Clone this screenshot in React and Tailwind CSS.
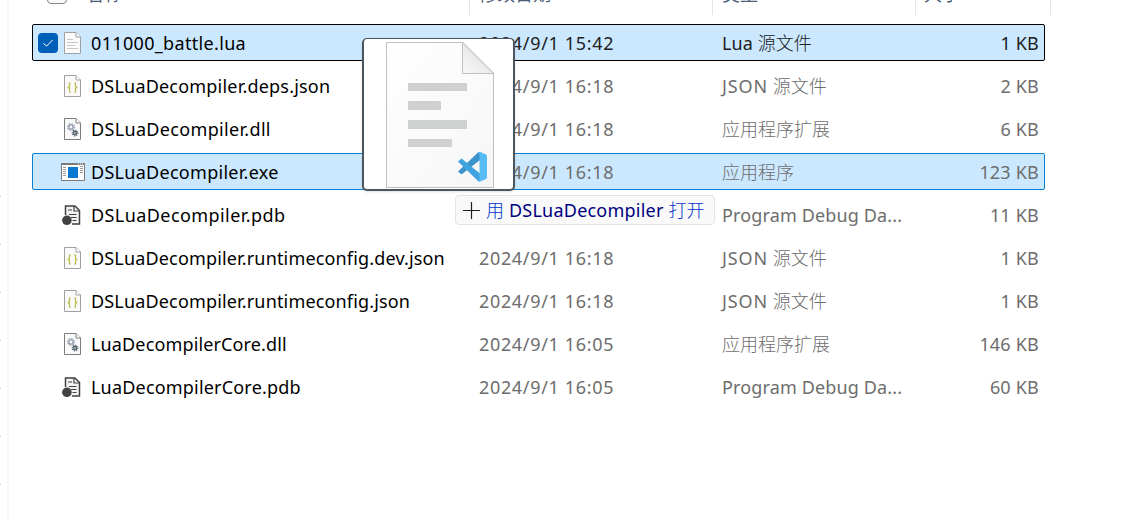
import React from 'react';

const rows = [
  { name: '011000_battle.lua', date: '2024/9/1 15:42', type: ['Lua', '源文件'], size: '1 KB', icon: 'text', state: 'focused', tracking: 'tracking-[0.33px]' },
  { name: 'DSLuaDecompiler.deps.json', date: '2024/9/1 16:18', type: ['JSON', '源文件'], size: '2 KB', icon: 'json', tracking: 'tracking-[0.2px]' },
  { name: 'DSLuaDecompiler.dll', date: '2024/9/1 16:18', type: ['', '应用程序扩展'], size: '6 KB', icon: 'dll', tracking: 'tracking-[0.33px]' },
  { name: 'DSLuaDecompiler.exe', date: '2024/9/1 16:18', type: ['', '应用程序'], size: '123 KB', icon: 'exe', state: 'target', tracking: 'tracking-[0.28px]' },
  { name: 'DSLuaDecompiler.pdb', date: '2024/9/1 16:18', type: ['Program Debug Da...', ''], size: '11 KB', icon: 'pdb', tracking: 'tracking-[0.42px]' },
  { name: 'DSLuaDecompiler.runtimeconfig.dev.json', date: '2024/9/1 16:18', type: ['JSON', '源文件'], size: '1 KB', icon: 'json', tracking: 'tracking-[0.16px]' },
  { name: 'DSLuaDecompiler.runtimeconfig.json', date: '2024/9/1 16:18', type: ['JSON', '源文件'], size: '1 KB', icon: 'json', tracking: 'tracking-[0.16px]' },
  { name: 'LuaDecompilerCore.dll', date: '2024/9/1 16:05', type: ['', '应用程序扩展'], size: '146 KB', icon: 'dll', tracking: 'tracking-[0.14px]' },
  { name: 'LuaDecompilerCore.pdb', date: '2024/9/1 16:05', type: ['Program Debug Da...', ''], size: '60 KB', icon: 'pdb', tracking: 'tracking-[0.19px]' },
];

function Page({ stroke, children }) {
  return (
    <>
      <path d="M4.5 1.5H16L20.5 6V22.5H4.5Z" fill="#fafafa" stroke={stroke} />
      <path d="M16 1.5V6H20.5" fill="#fff" stroke={stroke} />
      {children}
    </>
  );
}

function Gear({ x, y, r, color }) {
  return (
    <g transform={`translate(${x} ${y})`}>
      <circle r={r} fill="none" stroke={color} strokeWidth="1.6" />
      <circle r={r + 1.3} fill="none" stroke={color} strokeWidth="1.2" strokeDasharray={`${((r + 1.3) * Math.PI) / 8}`} />
    </g>
  );
}

function FileIcon({ kind }) {
  return (
    <svg viewBox="0 0 24 24" className="h-6 w-6 shrink-0 overflow-visible">
      {kind === 'text' && (
        <Page stroke="#a0a0a0">
          <path d="M7 8.5H13M7 11.5H18M7 14.5H15M7 17.5H18" stroke="#c6c6c6" strokeWidth="1.2" />
        </Page>
      )}
      {kind === 'json' && (
        <Page stroke="#a0a0a0">
          <path
            d="M10.800 9H9.500V12.600L8.200 13.500L9.500 14.400V18H10.800M14.200 9H15.500V12.600L16.800 13.500L15.500 14.400V18H14.200"
            fill="none"
            stroke="#bcbb48"
            strokeWidth="1.2"
          />
        </Page>
      )}
      {kind === 'dll' && (
        <Page stroke="#7c7c7c">
          <Gear x={11} y={10} r={2.2} color="#9aa5b1" />
          <Gear x={15} y={16} r={1.6} color="#56646f" />
        </Page>
      )}
      {kind === 'exe' && (
        <g transform="translate(1 0)">
          <path d="M0.5 3.5H23.5V20.500H0.5Z" fill="#fff" stroke="#7b7b7b" />
          <path d="M0 3H24V5H0Z" fill="#7b7b7b" />
          <path d="M17 4H22" stroke="#fff" strokeWidth="1" strokeDasharray="1 1" />
          <path d="M2 7.5H5M2 9.500H5M2 11.500H5M2 13.500H5M2 15.500H5M19 6.500H22M19 8.500H22M19 10.500H22M19 12.500H22" stroke="#9b9b9b" />
          <path d="M7 7H17V18H7Z" fill="#0a78d0" />
        </g>
      )}
      {kind === 'pdb' && (
        <>
          <path d="M5.5 12V3H15L19.5 7.5V21H12" fill="#f2f2f2" stroke="#424242" strokeWidth="1.5" />
          <path d="M14 3V8H19.5M8 7H12M9 11.5H16.5M11 14.5H16.5M12.5 17.5H16.5" fill="none" stroke="#424242" strokeWidth="1.2" />
          <circle cx="6.9" cy="17.3" r="4.8" fill="#424242" />
        </>
      )}
    </svg>
  );
}

const rowStyles = {
  focused: 'border-black bg-[#cce8ff]',
  target: 'border-[#0b7fd6] bg-[#cce8ff]',
  idle: 'border-transparent',
};

function TypeLabel({ type: [latin, han] }) {
  return (
    <>
      {latin && <span className={latin === 'JSON' ? 'tracking-[0.9px]' : 'tracking-[0.14px]'}>{latin}</span>}
      {latin && han && ' '}
      {han && <span className="font-light">{han}</span>}
    </>
  );
}

function FileRow({ row }) {
  const focused = row.state === 'focused';
  const meta = focused ? 'text-[#202020]' : 'text-[#6d6d6d]';
  return (
    <div className={`flex h-[37px] w-[1013px] items-center rounded-xs border pr-[5px] ${rowStyles[row.state || 'idle']}`}>
      <div className="flex w-[27px] shrink-0 items-center pl-[5px]">
        {focused && (
          <div className="flex h-5 w-5 items-center justify-center rounded bg-[#005fb8]">
            <svg viewBox="0 0 20 20" className="h-5 w-5">
              <path d="M5.5 10.2L8.5 13.2L14.5 7" fill="none" stroke="#fff" strokeWidth="1" />
            </svg>
          </div>
        )}
      </div>
      <FileIcon kind={row.icon} />
      <div className={`w-[389px] shrink-0 pl-[7px] text-black ${row.tracking}`}>{row.name}</div>
      <div className={`w-[243px] shrink-0 pl-1.5 tracking-[0.66px] ${meta}`}>{row.date}</div>
      <div className={`w-[200px] shrink-0 pl-1.5 ${meta}`}>
        <TypeLabel type={row.type} />
      </div>
      <div className={`flex-1 text-right tracking-[0.2px] ${meta}`}>{row.size}</div>
    </div>
  );
}

function HeaderCell({ label, className }) {
  return (
    <div className={`h-[15px] shrink-0 border-r border-[#e5e5e5] ${className}`}>
      <div className="-mt-[15px] h-[18px] leading-[18px]">{label}</div>
    </div>
  );
}

function DragPreview() {
  return (
    <div className="absolute top-[38px] left-[362px] h-[153px] w-[153px] rounded-[5px] border-2 border-t border-[#4b565e] bg-white shadow-sm">
      <svg viewBox="0 -1 149 150" className="h-[150px] w-[149px]">
        <defs>
          <linearGradient id="paper" x1="0" y1="0" x2="1" y2="1">
            <stop offset="0" stopColor="#fff" />
            <stop offset="1" stopColor="#f5f6f7" />
          </linearGradient>
          <linearGradient id="fold" x1="0" y1="1" x2="1" y2="0">
            <stop offset="0" stopColor="#f7f7f7" />
            <stop offset="1" stopColor="#dedede" />
          </linearGradient>
        </defs>
        <path d="M22.5 2.5H99L129.5 33V147.5H22.5Z" fill="url(#paper)" stroke="#c0c2c2" />
        <path d="M98.5 2.5V33.5H129.5C119 23 109 14 98.5 2.5Z" fill="url(#fold)" stroke="#c0c2c2" />
        <path d="M44 43H103V51H44ZM44 61H77V70H44ZM44 80H103V89H44ZM44 99H88V107H44Z" fill="#cfd1d0" />
        <path d="M94 131.500L97.500 134.500L116 120V112H114.500Z" fill="#3d94ca" />
        <path d="M94 121.500L97.500 118.500L116 133.500V141.500H114.500Z" fill="#3fa3df" />
        <path d="M114.500 112.200Q115.500 111.500 117 112.200L122 114.500Q123 115 123 116.500V137Q123 138.500 122 139L117 141.300Q115.500 142 114.500 141.300L115.500 139V115Z" fill="#57bdf4" />
      </svg>
    </div>
  );
}

export default function App() {
  return (
    <div className="relative flex h-[522px] w-[1124px] overflow-hidden bg-white font-['Noto_Sans','Noto_Sans_CJK_SC',sans-serif] text-[18px] leading-6">
      <div className="flex h-[521px] w-[9px] shrink-0 flex-col gap-[47px] border-r-2 border-[#f6f6f6] pt-[196px]">
        {[0, 1, 2, 3, 4, 5, 6].map((i) => (
          <div key={i} className="h-px w-px shrink-0 bg-[#c4c4c4]" />
        ))}
      </div>
      <div className="flex flex-col pl-[23px]">
        <div className="flex h-6 overflow-hidden text-[#4c607a]">
          <div className="w-[54px] shrink-0 pl-[15px]">
            <div className="-mt-4 h-5 w-5 rounded border border-[#868686] bg-[#fafafa]" />
          </div>
          <HeaderCell className="w-[384px]" label="名称" />
          <HeaderCell className="w-[243px] pl-[9px]" label="修改日期" />
          <HeaderCell className="w-[203px] pl-[9px]" label="类型" />
          <HeaderCell className="w-[135px] pl-2" label="大小" />
        </div>
        <div className="flex flex-col gap-1.5">
          {rows.map((row) => (
            <FileRow key={row.name} row={row} />
          ))}
        </div>
      </div>
      <DragPreview />
      <div className="absolute top-[195px] left-[455px] flex h-[30px] w-[260px] items-center rounded border border-[#e3e3e3] bg-[#f9f9f9] pl-[7px]">
        <svg viewBox="0 0 18 18" className="h-[18px] w-[18px]">
          <path d="M0 9.500H17M8.500 1V18" stroke="#202020" strokeWidth="1.2" />
        </svg>
        <div className="flex gap-[5px] pl-[5px] whitespace-nowrap text-[#0033cc]">
          <span className="font-light">用</span>
          <span className="tracking-[0.22px] text-[#000080]">DSLuaDecompiler</span>
          <span className="font-light">打开</span>
        </div>
      </div>
    </div>
  );
}
